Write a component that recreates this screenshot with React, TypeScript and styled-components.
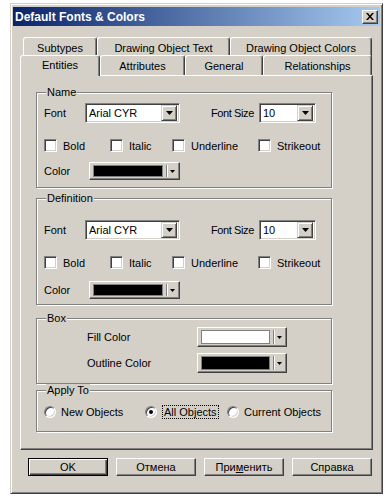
import React from "react";
import styled, { createGlobalStyle } from "styled-components";

const GlobalStyle = createGlobalStyle`
  html, body {
    margin: 0;
    padding: 0;
    background: #fff;
  }
  body {
    font-family: "Liberation Sans", Arial, sans-serif;
    font-size: 11px;
    color: #000;
  }
`;

const Window = styled.div`
  box-sizing: border-box;
  width: 373px;
  height: 491px;
  margin: 3px 0 0 10px;
  padding: 3px 2px 2px 2px;
  background: #d4d0c8;
  border: 1px solid;
  border-color: #d4d0c8 #404040 #404040 #d4d0c8;
  box-shadow: inset 1px 1px 0 #fff, inset -1px -1px 0 #808080;
  display: flex;
  flex-direction: column;
`;

const TitleBar = styled.div`
  height: 19px;
  display: flex;
  align-items: center;
  background: linear-gradient(to right, #0a246a, #a6caf0);
`;

const Title = styled.span`
  flex: 1;
  padding-left: 2px;
  color: #fff;
  font-weight: bold;
  font-size: 12px;
`;

const CloseBtn = styled.div`
  box-sizing: border-box;
  width: 16px;
  height: 14px;
  margin-right: 2px;
  background: #d4d0c8;
  border: 1px solid;
  border-color: #fff #404040 #404040 #fff;
  box-shadow: inset -1px -1px 0 #808080;
  display: flex;
  align-items: center;
  justify-content: center;
`;

const Body = styled.div`
  padding: 11px 7px 0 7px;
  display: flex;
  flex-direction: column;
`;

const TabRow = styled.div<{ $h: number; $indent?: number }>`
  display: flex;
  align-items: flex-end;
  height: ${(p) => p.$h}px;
  padding-left: ${(p) => p.$indent ?? 0}px;
`;

const Tab = styled.div<{ $w: number; $active?: boolean }>`
  box-sizing: border-box;
  position: relative;
  z-index: ${(p) => (p.$active ? 2 : 0)};
  width: ${(p) => p.$w}px;
  height: ${(p) => (p.$active ? 21 : 20)}px;
  margin-bottom: ${(p) => (p.$active ? -1 : 0)}px;
  padding-top: ${(p) => (p.$active ? 3 : 4)}px;
  line-height: 13px;
  text-align: center;
  white-space: nowrap;
  background: #d4d0c8;
  border-top: 1px solid #fff;
  border-left: 1px solid #fff;
  border-right: 1px solid #404040;
  border-radius: 3px 3px 0 0;
  box-shadow: inset -1px 0 0 #808080;
`;

const Panel = styled.div`
  box-sizing: border-box;
  height: 375px;
  padding: 16px 0 0 15px;
  border: 1px solid;
  border-color: #fff #404040 #404040 #fff;
  box-shadow: inset -1px -1px 0 #808080;
  display: flex;
  flex-direction: column;
`;

const Group = styled.div<{ $h: number; $mt: number; $pt: number }>`
  box-sizing: border-box;
  position: relative;
  width: 296px;
  height: ${(p) => p.$h}px;
  margin-top: ${(p) => p.$mt}px;
  padding: ${(p) => p.$pt}px 0 0 7px;
  border: 1px solid #808080;
  box-shadow: inset 1px 1px 0 #fff, 1px 1px 0 #fff;
  display: flex;
  flex-direction: column;
`;

const Legend = styled.span`
  position: absolute;
  top: -7px;
  left: 9px;
  padding: 0 1px;
  line-height: 13px;
  background: #d4d0c8;
`;

const Row = styled.div<{ $h: number; $mt?: number }>`
  display: flex;
  align-items: center;
  height: ${(p) => p.$h}px;
  margin-top: ${(p) => p.$mt ?? 0}px;
`;

const Label = styled.span<{ $w?: number; $ml?: number; $tight?: boolean }>`
  flex-shrink: 0;
  width: ${(p) => (p.$w ? `${p.$w}px` : "auto")};
  margin-left: ${(p) => p.$ml ?? 0}px;
  letter-spacing: ${(p) => (p.$tight ? "-0.4px" : "normal")};
  white-space: nowrap;
`;

const Combo = styled.div<{ $w: number }>`
  box-sizing: border-box;
  width: ${(p) => p.$w}px;
  height: 20px;
  background: #fff;
  border: 1px solid;
  border-color: #808080 #fff #fff #808080;
  box-shadow: inset 1px 1px 0 #404040, inset -1px -1px 0 #d4d0c8;
  display: flex;
  align-items: center;
  padding: 2px 2px 2px 3px;
`;

const ComboText = styled.span`
  flex: 1;
  line-height: 14px;
`;

const DropBtn = styled.div`
  box-sizing: border-box;
  width: 16px;
  height: 16px;
  background: #d4d0c8;
  border: 1px solid;
  border-color: #d4d0c8 #404040 #404040 #d4d0c8;
  box-shadow: inset 1px 1px 0 #fff, inset -1px -1px 0 #808080;
  display: flex;
  align-items: center;
  justify-content: center;
`;

const ColorBtn = styled.div<{ $w: number; $h: number }>`
  box-sizing: border-box;
  width: ${(p) => p.$w}px;
  height: ${(p) => p.$h}px;
  padding: 2px 2px 2px 3px;
  background: #d4d0c8;
  border: 1px solid;
  border-color: #fff #404040 #404040 #fff;
  box-shadow: inset -1px -1px 0 #808080;
  display: flex;
  align-items: stretch;
`;

const Swatch = styled.div<{ $color: string }>`
  flex: 1;
  background: ${(p) => p.$color};
  border: 1px solid #808080;
`;

const Divider = styled.div`
  width: 1px;
  margin: 0 1px 0 3px;
  background: #808080;
  box-shadow: 1px 0 0 #fff;
`;

const ArrowBox = styled.div`
  width: 9px;
  display: flex;
  align-items: center;
  justify-content: center;
`;

const CheckItem = styled.label<{ $w?: number }>`
  flex-shrink: 0;
  width: ${(p) => (p.$w ? `${p.$w}px` : "auto")};
  display: flex;
  align-items: center;
  gap: 6px;
`;

const CheckBox = styled.span`
  box-sizing: border-box;
  width: 13px;
  height: 13px;
  background: #fff;
  border: 1px solid;
  border-color: #808080 #fff #fff #808080;
  box-shadow: inset 1px 1px 0 #404040, inset -1px -1px 0 #d4d0c8;
`;

const RadioItem = styled.label<{ $w?: number }>`
  flex-shrink: 0;
  width: ${(p) => (p.$w ? `${p.$w}px` : "auto")};
  display: flex;
  align-items: center;
  gap: 5px;
`;

const Radio = styled.span<{ $on?: boolean }>`
  box-sizing: border-box;
  width: 12px;
  height: 12px;
  border-radius: 50%;
  background: #fff;
  border: 1px solid;
  border-color: #808080 #fff #fff #808080;
  box-shadow: inset 1px 1px 0 #404040, inset -1px -1px 0 #d4d0c8;
  display: flex;
  align-items: center;
  justify-content: center;
  &::after {
    content: "";
    display: ${(p) => (p.$on ? "block" : "none")};
    width: 4px;
    height: 4px;
    border-radius: 50%;
    background: #000;
  }
`;

const Focus = styled.span`
  padding: 0 1px;
  border: 1px dotted #000;
  line-height: 12px;
`;

const Footer = styled.div`
  display: flex;
  justify-content: flex-end;
  gap: 8px;
  margin-top: 8px;
  padding-right: 1px;
`;

const Button = styled.button<{ $default?: boolean }>`
  box-sizing: border-box;
  width: 80px;
  height: 18px;
  padding: 0;
  font-family: "Liberation Sans", Arial, sans-serif;
  font-size: 11px;
  color: #000;
  background: #d4d0c8;
  border: 1px solid;
  border-color: ${(p) => (p.$default ? "#000" : "#fff #404040 #404040 #fff")};
  box-shadow: ${(p) =>
    p.$default
      ? "inset 1px 1px 0 #fff, inset -1px -1px 0 #404040, inset -2px -2px 0 #808080"
      : "inset -1px -1px 0 #808080"};
`;

const Down = ({ w = 7 }: { w?: number }) => (
  <svg width={w} height={Math.ceil(w / 2)} viewBox={`0 0 ${w} ${Math.ceil(w / 2)}`}>
    <polygon points={`0,0 ${w},0 ${w / 2},${Math.ceil(w / 2)}`} fill="#000" />
  </svg>
);

const FontCombo = ({ w, value }: { w: number; value: string }) => (
  <Combo $w={w}>
    <ComboText>{value}</ComboText>
    <DropBtn>
      <Down />
    </DropBtn>
  </Combo>
);

const ColorPick = ({ color, w, h }: { color: string; w: number; h: number }) => (
  <ColorBtn $w={w} $h={h}>
    <Swatch $color={color} />
    <Divider />
    <ArrowBox>
      <Down w={5} />
    </ArrowBox>
  </ColorBtn>
);

const FontBlock = ({ title, h, mt, pt, colorMt }: { title: string; h: number; mt: number; pt: number; colorMt: number }) => (
  <Group $h={h} $mt={mt} $pt={pt}>
    <Legend>{title}</Legend>
    <Row $h={20}>
      <Label $w={41}>Font</Label>
      <FontCombo w={95} value="Arial CYR" />
      <Label $w={48} $ml={31} $tight>Font Size</Label>
      <FontCombo w={57} value="10" />
    </Row>
    <Row $h={13} $mt={16}>
      <CheckItem $w={66}><CheckBox />Bold</CheckItem>
      <CheckItem $w={62}><CheckBox />Italic</CheckItem>
      <CheckItem $w={86}><CheckBox />Underline</CheckItem>
      <CheckItem><CheckBox />Strikeout</CheckItem>
    </Row>
    <Row $h={18} $mt={colorMt}>
      <Label $w={45}>Color</Label>
      <ColorPick color="#000" w={91} h={18} />
    </Row>
  </Group>
);

export default function App() {
  return (
    <>
      <GlobalStyle />
      <Window>
        <TitleBar>
          <Title>Default Fonts &amp; Colors</Title>
          <CloseBtn>
            <svg width="8" height="7" viewBox="0 0 8 7">
              <path d="M0 0h2l2 2.5L6 0h2L5 3.5 8 7H6L4 4.5 2 7H0l3-3.5z" fill="#000" />
            </svg>
          </CloseBtn>
        </TitleBar>
        <Body>
          <TabRow $h={20} $indent={3}>
            <Tab $w={74}>Subtypes</Tab>
            <Tab $w={133}>Drawing Object Text</Tab>
            <Tab $w={142}>Drawing Object Colors</Tab>
          </TabRow>
          <TabRow $h={18}>
            <Tab $w={80} $active>Entities</Tab>
            <Tab $w={85}>Attributes</Tab>
            <Tab $w={78}>General</Tab>
            <Tab $w={109}>Relationships</Tab>
          </TabRow>
          <Panel>
            <FontBlock title="Name" h={96} mt={0} pt={10} colorMt={10} />
            <FontBlock title="Definition" h={107} mt={10} pt={21} colorMt={12} />
            <Group $h={66} $mt={13} $pt={8}>
              <Legend>Box</Legend>
              <Row $h={20}>
                <Label $w={110} $ml={43}>Fill Color</Label>
                <ColorPick color="#fff" w={90} h={20} />
              </Row>
              <Row $h={20} $mt={6}>
                <Label $w={110} $ml={43}>Outline Color</Label>
                <ColorPick color="#000" w={90} h={20} />
              </Row>
            </Group>
            <Group $h={42} $mt={6} $pt={14}>
              <Legend>Apply To</Legend>
              <Row $h={13}>
                <RadioItem $w={101}><Radio />New Objects</RadioItem>
                <RadioItem $w={82}><Radio $on /><Focus>All Objects</Focus></RadioItem>
                <RadioItem><Radio />Current Objects</RadioItem>
              </Row>
            </Group>
          </Panel>
          <Footer>
            <Button $default>OK</Button>
            <Button>Отмена</Button>
            <Button>При<u>м</u>енить</Button>
            <Button>Справка</Button>
          </Footer>
        </Body>
      </Window>
    </>
  );
}
